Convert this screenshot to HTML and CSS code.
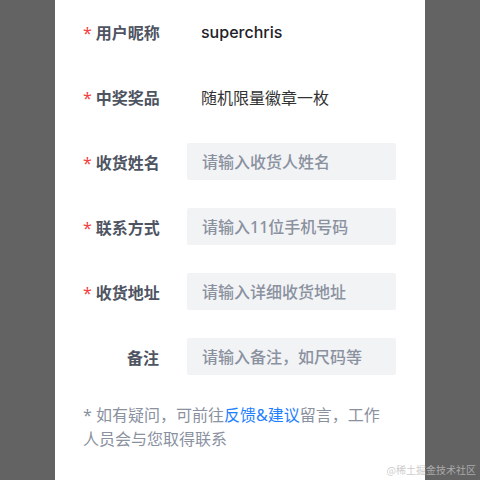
FILE: index.html
```html
<!DOCTYPE html>
<html>
<head>
    <meta charset="utf-8">
    <title>领奖信息</title>
    <link rel="stylesheet" href="styles.css">
</head>
<body>
    <div class="sheet">
        <form class="prize-form">
            <div class="form-row">
                <label class="form-label required">用户昵称</label>
                <div class="form-value nickname">superchris</div>
            </div>
            <div class="form-row">
                <label class="form-label required">中奖奖品</label>
                <div class="form-value">随机限量徽章一枚</div>
            </div>
            <div class="form-row">
                <label class="form-label required">收货姓名</label>
                <input class="form-input" type="text" placeholder="请输入收货人姓名">
            </div>
            <div class="form-row">
                <label class="form-label required">联系方式</label>
                <input class="form-input" type="text" placeholder="请输入11位手机号码">
            </div>
            <div class="form-row">
                <label class="form-label required">收货地址</label>
                <input class="form-input" type="text" placeholder="请输入详细收货地址">
            </div>
            <div class="form-row">
                <label class="form-label">备注</label>
                <input class="form-input" type="text" placeholder="请输入备注，如尺码等">
            </div>
        </form>
        <p class="form-tip">* 如有疑问，可前往<a href="#">反馈&amp;建议</a>留言，工作人员会与您取得联系</p>
    </div>
    <span class="watermark">@稀土掘金技术社区</span>
</body>
</html>
```

FILE: styles.css
```css
:root {
    --mask-color: #636363;
    --label-color: #4e5462;
    --text-color: #333333;
    --muted-color: #8a919f;
    --input-bg: #f2f3f5;
    --link-color: #1e80ff;
    --danger-color: #f53f3f;
}

html, body {
    height: 100%;
}

body {
    margin: 0;
    background: var(--mask-color);
    font-family: "Noto Sans", "Noto Sans CJK SC", sans-serif;
    overflow: hidden;
}

.sheet {
    width: 370px;
    min-height: 100%;
    margin: 0 auto;
    background: #fff;
    box-sizing: border-box;
    padding: 13px 29px 0 28px;
}

.prize-form {
    display: flex;
    flex-direction: column;
    gap: 28px;
}

.form-row {
    display: flex;
    align-items: center;
    gap: 28px;
    height: 37px;
}

.form-label {
    width: 76px;
    flex-shrink: 0;
    text-align: right;
    font-size: 16px;
    font-weight: 600;
    color: var(--label-color);
    white-space: nowrap;
}

.form-label.required::before {
    content: "*";
    color: var(--danger-color);
    margin-right: 4px;
    font-weight: 400;
}

.form-value {
    padding-left: 14px;
    font-size: 16px;
    color: var(--text-color);
}

.form-value.nickname {
    font-family: Inter, "Noto Sans CJK SC", sans-serif;
    font-weight: 500;
    color: #1d2129;
}

.form-input {
    flex: 1;
    min-width: 0;
    height: 37px;
    box-sizing: border-box;
    border: none;
    border-radius: 2px;
    outline: none;
    background: var(--input-bg);
    padding: 0 15px;
    font-family: inherit;
    font-size: 16px;
    color: var(--text-color);
}

.form-input::placeholder {
    color: var(--muted-color);
    font-weight: 500;
}

.form-tip {
    margin: 28px 16px 0 0;
    font-size: 16px;
    line-height: 24px;
    color: var(--muted-color);
}

.form-tip a {
    color: var(--link-color);
    text-decoration: none;
}

.watermark {
    position: absolute;
    right: 4px;
    bottom: 3px;
    font-size: 10px;
    color: rgba(190, 190, 190, 0.8);
    font-family: "Noto Sans CJK SC", sans-serif;
}
```
